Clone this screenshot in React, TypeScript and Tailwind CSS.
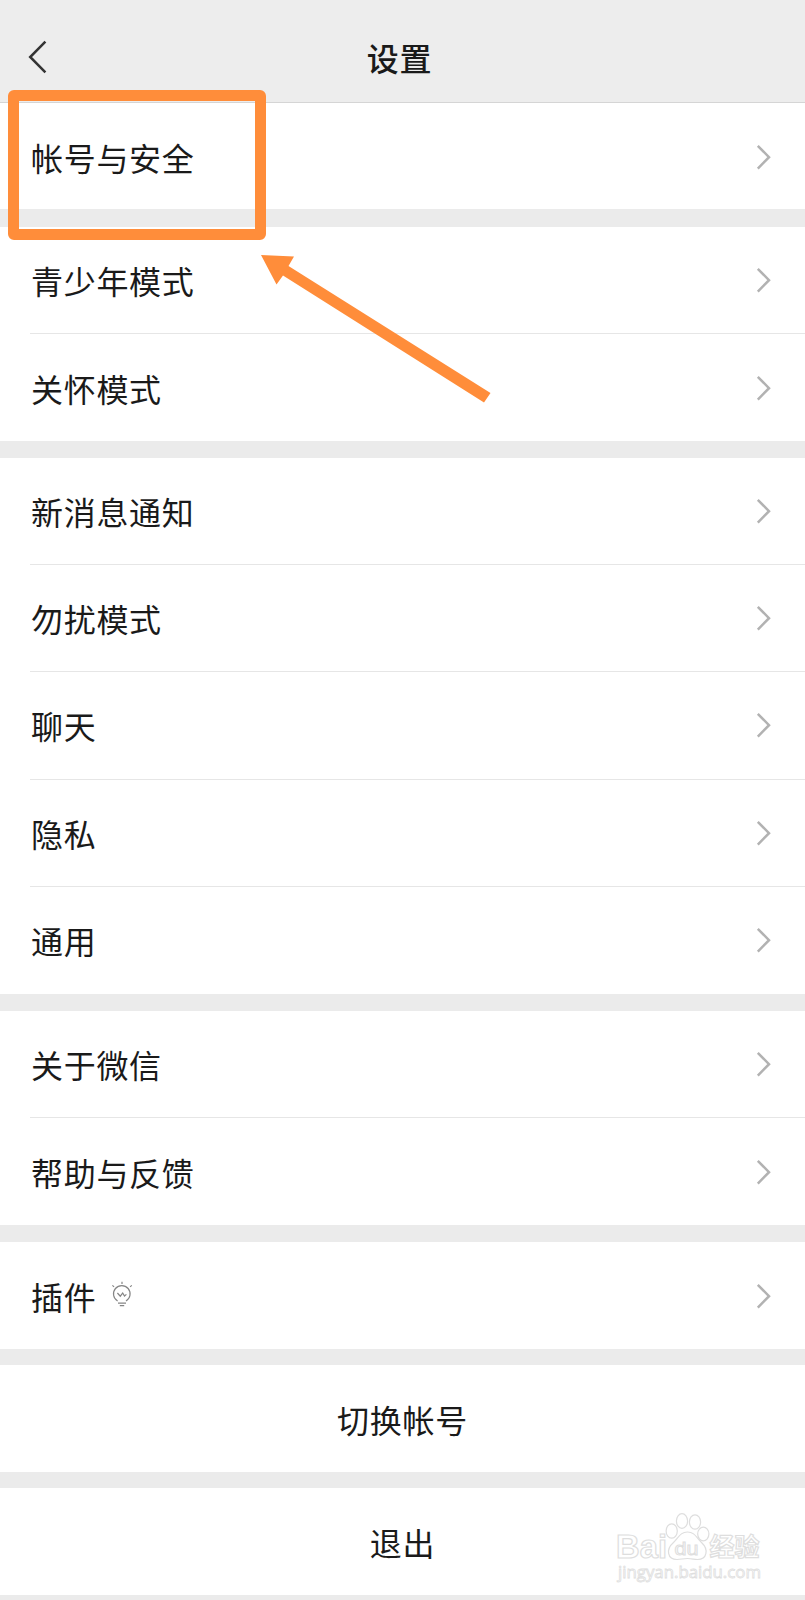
import clsx from "clsx";

const groups = [
  { height: "h-[106px]", gap: "mb-[18px]", items: ["帐号与安全"] },
  { height: "h-[214px]", gap: "mb-[17px]", items: ["青少年模式", "关怀模式"] },
  {
    height: "h-[536px]",
    gap: "mb-[17px]",
    items: ["新消息通知", "勿扰模式", "聊天", "隐私", "通用"],
  },
  { height: "h-[214px]", gap: "mb-[17px]", items: ["关于微信", "帮助与反馈"] },
  { height: "h-[107px]", gap: "mb-4", items: ["插件"] },
];

const actions = ["切换帐号", "退出"];

const Chevron: React.FC = () => (
  <svg width="16" height="28" viewBox="0 0 16 28" fill="none" className="mr-[33px]">
    <path d="M1.8 2.8 13 14.2 1.8 25.600" stroke="#b2b2b2" strokeWidth="2.5" />
  </svg>
);

const Bulb: React.FC = () => (
  <svg width="22" height="26" viewBox="0 0 22 26" fill="none" stroke="#858585" strokeWidth="1.2" className="mb-[3px] ml-[15px]">
    <path d="M6.600 20A8.300 8.300 0 1 1 15 20" />
    <path d="m6.400 12 2.900 3.200 2.400-3.200 1.800 3 1.900-1.600" />
    <path d="M7 22.200h8M8.800 24.700h4.400M11 .8v2.200M1.400 4.400l1.700 1.500M20.800 4.400l-1.700 1.500" />
  </svg>
);

const Watermark: React.FC = () => (
  <svg
    width="160"
    height="80"
    viewBox="0 0 160 80"
    fill="#fff"
    stroke="#dedede"
    strokeWidth="1.2"
    className="absolute left-[610px] top-[1508px]"
  >
    <text
      x="6"
      y="50"
      fontFamily="'Liberation Sans', sans-serif"
      fontWeight="700"
      fontSize="33"
      letterSpacing="0"
      textLength="51"
      lengthAdjust="spacingAndGlyphs"
    >
      Bai
    </text>
    <ellipse cx="61.700" cy="23" rx="5.600" ry="7.200" />
    <ellipse cx="72" cy="13" rx="5.600" ry="7.400" />
    <ellipse cx="85" cy="14" rx="5.600" ry="7.200" />
    <ellipse cx="93.300" cy="26" rx="5.600" ry="6.800" />
    <path d="M77.500 24C70 24 68.500 30 63.500 34.500C55.500 41.500 57.500 51.500 67 51.500C71 51.500 73 50.500 77.500 50.500C82 50.500 84 51.500 87.500 51.500C97 51.500 99 41.500 91.500 34.500C86.500 30 85 24 77.500 24Z" />
    <text
      x="64.500"
      y="46.500"
      fontFamily="'Liberation Sans', sans-serif"
      fontSize="19"
      strokeWidth="1"
      letterSpacing="0"
      textLength="24"
      lengthAdjust="spacingAndGlyphs"
    >
      du
    </text>
    <text x="99.500" y="48" fontFamily="'Noto Sans CJK SC', sans-serif" fontWeight="700" fontSize="25" letterSpacing="0">
      经验
    </text>
    <text
      x="8"
      y="69.500"
      fontFamily="'Open Sans', sans-serif"
      fontSize="16.500"
      strokeWidth="0.8"
      letterSpacing="0"
      textLength="143"
      lengthAdjust="spacingAndGlyphs"
    >
      jingyan.baidu.com
    </text>
  </svg>
);

const App: React.FC = () => {
  return (
    <div className="relative h-[1600px] w-[805px] overflow-hidden bg-[#ebebeb] font-['Noto_Sans_CJK_SC',sans-serif] text-[32px] leading-none tracking-[0.7px] text-[#1a1a1a]">
      {/* Title bar */}
      <header className="flex h-[103px] items-center border-b border-[#d5d5d5] bg-[#ededed] pt-[11px]">
        <svg width="20" height="34" viewBox="0 0 20 34" fill="none" className="ml-[28px]">
          <path d="M17.400 1.600 2.200 17 17.400 32.400" stroke="#333" strokeWidth="2.500" />
        </svg>
        <h1 className="mr-[54px] flex-1 text-center font-medium">设置</h1>
      </header>

      {/* Setting groups */}
      {groups.map((group) => (
        <section key={group.items[0]} className={clsx("bg-white", group.height, group.gap)}>
          {group.items.map((item, i) => (
            <div
              key={item}
              className={clsx(
                "ml-[30px] flex h-[107.2px] items-center pl-px",
                i < group.items.length - 1 && "border-b border-[#e6e6e6]"
              )}
            >
              <span>{item}</span>
              {item === "插件" && <Bulb />}
              <span className="ml-auto">
                <Chevron />
              </span>
            </div>
          ))}
        </section>
      ))}

      {/* Account actions */}
      {actions.map((action) => (
        <button key={action} className="mb-4 flex h-[107px] w-full items-center justify-center bg-white">
          {action}
        </button>
      ))}

      {/* Highlight over the first row */}
      <div className="absolute left-[8px] top-[89.5px] h-[150px] w-[258px] rounded-[6px] border-[11px] border-[#ff8d3a]" />
      <svg width="240" height="160" viewBox="0 0 240 160" className="absolute left-[255px] top-[250px]">
        <path d="M6 5 39 6.500 33.500 16 235.500 143 229 152.500 28 25.500 21.500 34.500Z" fill="#ff8d3a" />
      </svg>

      <Watermark />
    </div>
  );
};

export default App;
